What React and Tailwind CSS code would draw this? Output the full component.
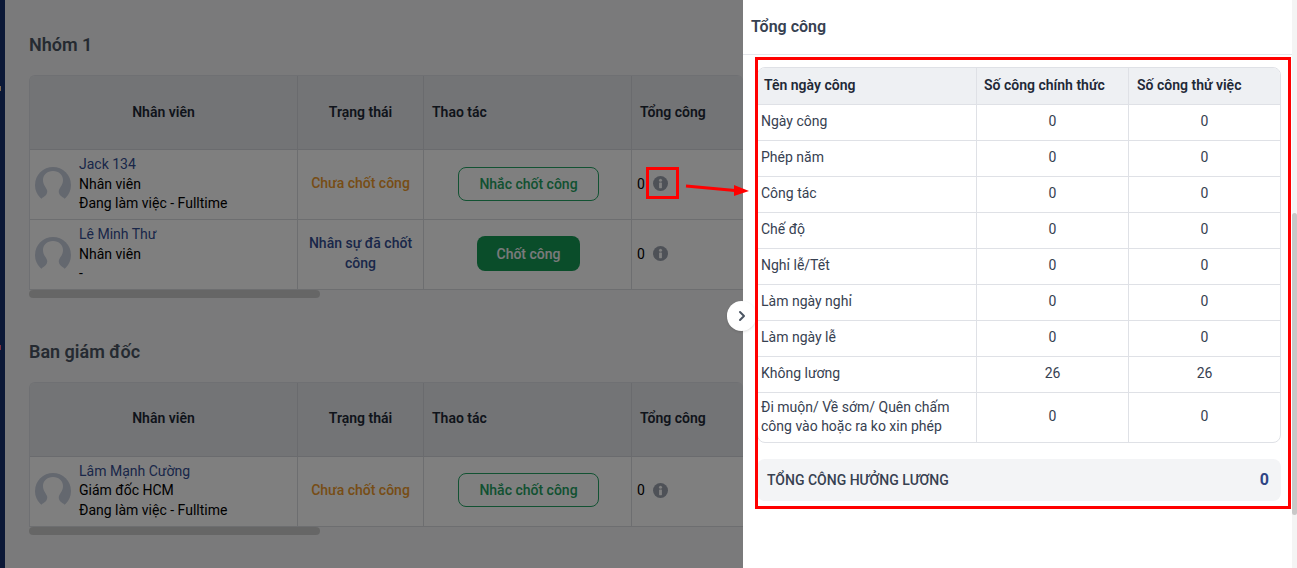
import { ChevronRight } from "lucide-react"

const summaryRows = [
  ["Ngày công", 0, 0],
  ["Phép năm", 0, 0],
  ["Công tác", 0, 0],
  ["Chế độ", 0, 0],
  ["Nghỉ lễ/Tết", 0, 0],
  ["Làm ngày nghỉ", 0, 0],
  ["Làm ngày lễ", 0, 0],
  ["Không lương", 26, 26],
]

const InfoIcon = () => (
  <svg width="15" height="15" viewBox="0 0 16 16" className="block">
    <circle cx="8" cy="8" r="8" fill="#9ca3af" />
    <circle cx="8" cy="4.400" r="1.600" fill="#ffffff" />
    <rect x="6.500" y="7" width="3" height="6" rx="0.500" fill="#ffffff" />
  </svg>
)

const Avatar = () => (
  <svg width="36" height="36" viewBox="0 0 36 36" className="shrink-0">
    <circle cx="18" cy="18" r="18" fill="#c9d0de" />
    <path
      d="M18 4c6 0 10 4 10 9 0 5-3 7-4 10-1 3 1 6 5 8l3 5H4l3-5c4-2 6-5 5-8-1-3-4-5-4-10 0-5 4-9 10-9z"
      fill="#ffffff"
    />
  </svg>
)

const Employee = ({ name, role, status }) => (
  <div className="flex items-center gap-2 pl-[5px] h-full">
    <Avatar />
    <div className="text-sm leading-[19.5px] text-left">
      <div className="text-[#344e93]">{name}</div>
      <div className="text-black">{role}</div>
      <div className="text-black">{status}</div>
    </div>
  </div>
)

const GroupTable = ({ rows }) => (
  <div className="w-[714px]">
    <div className="rounded-t-md border-l border-t border-[#dfe1e6] overflow-hidden">
      <div className="grid grid-cols-[268px_126px_208px_112px] h-[74px] bg-[#e6e8ec] text-sm font-semibold text-[#1f2937] border-b border-[#d5d7dc]">
        <div className="flex items-center justify-center border-r border-[#d5d7dc] pb-[2px]">Nhân viên</div>
        <div className="flex items-center justify-center border-r border-[#d5d7dc] pb-[2px]">Trạng thái</div>
        <div className="flex items-center pl-[8px] border-r border-[#d5d7dc] pb-[2px]">Thao tác</div>
        <div className="flex items-center pl-[8px] pb-[2px]">Tổng công</div>
      </div>
      {rows.map((r) => (
        <div
          key={r.name}
          className="grid grid-cols-[268px_126px_208px_112px] h-[70px] bg-white border-b border-[#dadce0]"
        >
          <div className="border-r border-[#dadce0]">
            <Employee name={r.name} role={r.role} status={r.status} />
          </div>
          <div
            className={`flex items-center justify-center text-center text-sm leading-[20px] font-medium px-2 pb-[3px] border-r border-[#dadce0] ${
              r.done ? "text-[#344e93]" : "text-[#ee9a2c]"
            }`}
          >
            {r.state}
          </div>
          <div className="flex items-center justify-center pl-[2px] pb-[2px] border-r border-[#dadce0]">
            {r.done ? (
              <button className="w-[103px] h-[35px] rounded-lg bg-[#159a55] text-[#f4f5f7] text-sm font-medium">
                Chốt công
              </button>
            ) : (
              <button className="w-[141px] h-[34px] rounded-lg border border-[#24a565] text-[#25a263] text-sm font-medium">
                Nhắc chốt công
              </button>
            )}
          </div>
          <div className="flex items-center gap-[8px] pl-[5px] pb-[2px] text-sm text-black">
            <span>0</span>
            <InfoIcon />
          </div>
        </div>
      ))}
    </div>
    <div className="w-[291px] h-[8px] rounded-full bg-[#cdcdcd]" />
  </div>
)

const App = () => {
  return (
    <div
      className="relative w-[1297px] h-[568px] overflow-hidden bg-[#f4f5f7] flex"
      style={{ fontFamily: "Roboto, sans-serif" }}
    >
      <div className="relative w-[5px] shrink-0 bg-[#16306f]">
        <span className="absolute left-0 top-[86px] w-[1px] h-[5px] bg-[#ffd0a0]" />
        <span className="absolute left-0 top-[345px] w-[1px] h-[5px] bg-[#ff6080]" />
      </div>

      <main className="pl-[24px] pt-[34px]">
        <h2 className="text-lg leading-[22px] font-semibold text-[#4b5563]">Nhóm 1</h2>
        <div className="mt-[19px]">
          <GroupTable
            rows={[
              { name: "Jack 134", role: "Nhân viên", status: "Đang làm việc - Fulltime", state: "Chưa chốt công" },
              { name: "Lê Minh Thư", role: "Nhân viên", status: "-", state: "Nhân sự đã chốt công", done: true },
            ]}
          />
        </div>
        <h2 className="mt-[43px] text-lg leading-[22px] font-semibold text-[#4b5563]">Ban giám đốc</h2>
        <div className="mt-[18.6px]">
          <GroupTable
            rows={[
              { name: "Lâm Mạnh Cường", role: "Giám đốc HCM", status: "Đang làm việc - Fulltime", state: "Chưa chốt công" },
            ]}
          />
        </div>
      </main>

      {/* overlay */}
      <div className="absolute inset-0 bg-black/50" />

      {/* drawer */}
      <aside className="absolute right-0 top-0 bottom-0 w-[554px] bg-white">
        <div className="h-[55px] mr-[4px] border-b border-[#e5e7eb] pl-[8px] pt-[17px] text-base leading-[20px] font-semibold text-[#374151]">
          Tổng công
        </div>
        <div className="pl-[14px] pr-[16px] pt-[12px]">
          <div className="rounded-lg border border-[#dfe1e6] overflow-hidden text-sm text-[#374151]">
            <div className="grid grid-cols-[219px_152px_151px] h-[37px] bg-[#eef0f3] font-semibold text-[#1f2937] border-b border-[#dfe1e6]">
              <div className="flex items-center pl-[6px] pb-[2px] border-r border-[#dfe1e6]">Tên ngày công</div>
              <div className="flex items-center pl-[7px] pb-[2px] border-r border-[#dfe1e6]">Số công chính thức</div>
              <div className="flex items-center pl-[8px] pb-[2px]">Số công thử việc</div>
            </div>
            {summaryRows.map(([label, a, b]) => (
              <div key={label} className="grid grid-cols-[219px_152px_151px] h-[36px] border-b border-[#dfe1e6]">
                <div className="flex items-center pl-[3px] pb-[3px] border-r border-[#dfe1e6]">{label}</div>
                <div className="flex items-center justify-center pb-[3px] border-r border-[#dfe1e6]">{a}</div>
                <div className="flex items-center justify-center pb-[3px]">{b}</div>
              </div>
            ))}
            <div className="grid grid-cols-[219px_152px_151px] h-[49px]">
              <div className="flex items-center pl-[3px] pb-[1px] leading-[19px] border-r border-[#dfe1e6]">
                Đi muộn/ Về sớm/ Quên chấm công vào hoặc ra ko xin phép
              </div>
              <div className="flex items-center justify-center pb-[3px] border-r border-[#dfe1e6]">0</div>
              <div className="flex items-center justify-center pb-[3px]">0</div>
            </div>
          </div>
          <div className="mt-[16px] h-[42px] rounded-lg bg-[#f3f4f6] flex items-center justify-between pl-[10px] pr-[12px]">
            <span className="text-sm font-medium text-[#374151]">TỔNG CÔNG HƯỞNG LƯƠNG</span>
            <span className="text-base font-bold text-[#2f4585]">0</span>
          </div>
        </div>
        <div className="absolute right-0 top-0 bottom-0 w-[5px] bg-[#f4f4f4]">
          <div className="mt-[213px] h-[302px] rounded-full bg-[#c8c8c8]" />
        </div>
      </aside>

      {/* collapse button */}
      <button className="absolute left-[727px] top-[301px] w-[29px] h-[30px] rounded-full bg-white shadow-sm flex items-center justify-center">
        <ChevronRight size={16} strokeWidth={3} className="text-[#4b5563]" />
      </button>

      {/* red annotations */}
      <div className="absolute left-[646px] top-[167px] w-[33px] h-[32px] border-[3px] border-[#ff0000]" />
      <div className="absolute left-[755px] top-[57px] w-[536px] h-[452px] border-[3px] border-[#ff0000]" />
      <svg className="absolute left-[680px] top-[178px]" width="76" height="24" viewBox="0 0 76 24">
        <path d="M6 8 L55 12.500" stroke="#ff0000" strokeWidth="3" />
        <path d="M54 7 L69 13 L54 18 Z" fill="#ff0000" />
      </svg>
    </div>
  )
}

export default App
